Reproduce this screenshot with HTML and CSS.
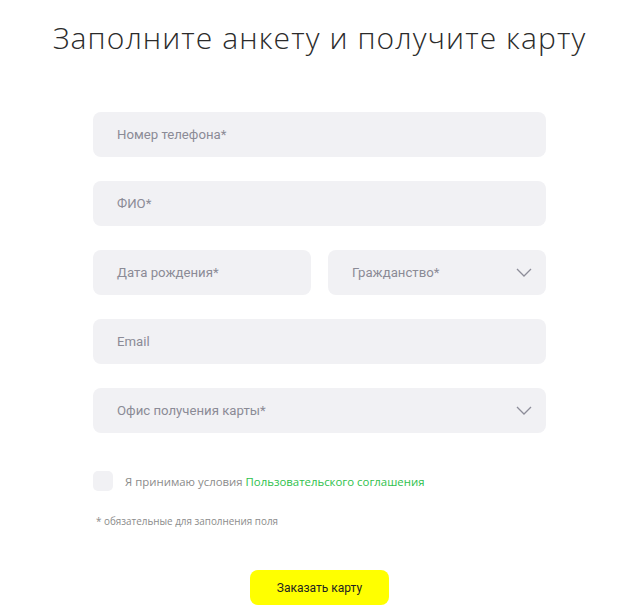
FILE: index.html
```html
<!DOCTYPE html>
<html lang="ru">
<head>
<meta charset="utf-8">
<link rel="stylesheet" href="styles.css">
</head>
<body>
<div class="page">
  <h1 class="title">Заполните анкету и получите карту</h1>
  <form class="form">
    <div class="field"><span class="ph">Номер телефона*</span></div>
    <div class="field"><span class="ph">ФИО*</span></div>
    <div class="row">
      <div class="field"><span class="ph">Дата рождения*</span></div>
      <div class="field select"><span class="ph">Гражданство*</span>
        <svg class="chev" width="16" height="9" viewBox="0 0 16 9"><path d="M1 1l7 7 7-7" fill="none" stroke="#8d8d99" stroke-width="1.3"/></svg>
      </div>
    </div>
    <div class="field"><span class="ph">Email</span></div>
    <div class="field select"><span class="ph">Офис получения карты*</span>
      <svg class="chev" width="16" height="9" viewBox="0 0 16 9"><path d="M1 1l7 7 7-7" fill="none" stroke="#8d8d99" stroke-width="1.3"/></svg>
    </div>
    <label class="agree"><span class="box"></span><span class="agree-text">Я принимаю условия <span class="link">Пользовательского соглашения</span></span></label>
    <p class="note">* обязательные для заполнения поля</p>
    <div class="btn-wrap"><span class="btn">Заказать карту</span></div>
  </form>
</div>
</body>
</html>
```
FILE: styles.css
```css
html, body { margin: 0; padding: 0; background: #fff; }
.page { padding-left: 5px; }
.title {
  margin: 20px 0 0;
  text-align: center;
  font-family: "Open Sans", sans-serif;
  font-weight: 300;
  font-size: 30px;
  line-height: 36px;
  color: #2b2b2b;
  letter-spacing: 1.1px;
}
.form {
  width: 453px;
  margin: 56px auto 0;
  display: flex;
  flex-direction: column;
  gap: 24px;
}
.row { display: flex; gap: 17px; }
.row .field { flex: 1; }
.field {
  height: 45px;
  background: #f1f1f4;
  border-radius: 8px;
  display: flex;
  align-items: center;
  justify-content: space-between;
  padding: 0 14px 0 24px;
  box-sizing: border-box;
}
.ph {
  font-family: Roboto, sans-serif;
  font-size: 13.2px;
  color: #8b8b96;
}
.chev { display: block; }
.agree {
  display: flex;
  align-items: center;
  gap: 12px;
  margin-top: 14px;
}
.box {
  width: 20px; height: 20px;
  border-radius: 5px;
  background: #f1f1f4;
}
.agree-text {
  font-family: "Open Sans", sans-serif;
  font-size: 11.4px;
  color: #8b8b8b;
}
.link { color: #2ec14b; }
.note {
  margin: -1px 0 0 3px;
  font-family: "Open Sans", sans-serif;
  font-size: 9.9px;
  color: #8b8b8b;
}
.btn-wrap { display: flex; justify-content: center; margin-top: 18px; padding-left: 0; }
.btn {
  width: 139px;
  height: 35px;
  border-radius: 8px;
  background: #ffff00;
  display: flex;
  align-items: center;
  justify-content: center;
  font-family: Roboto, sans-serif;
  font-size: 12px;
  color: #222;
}
```
